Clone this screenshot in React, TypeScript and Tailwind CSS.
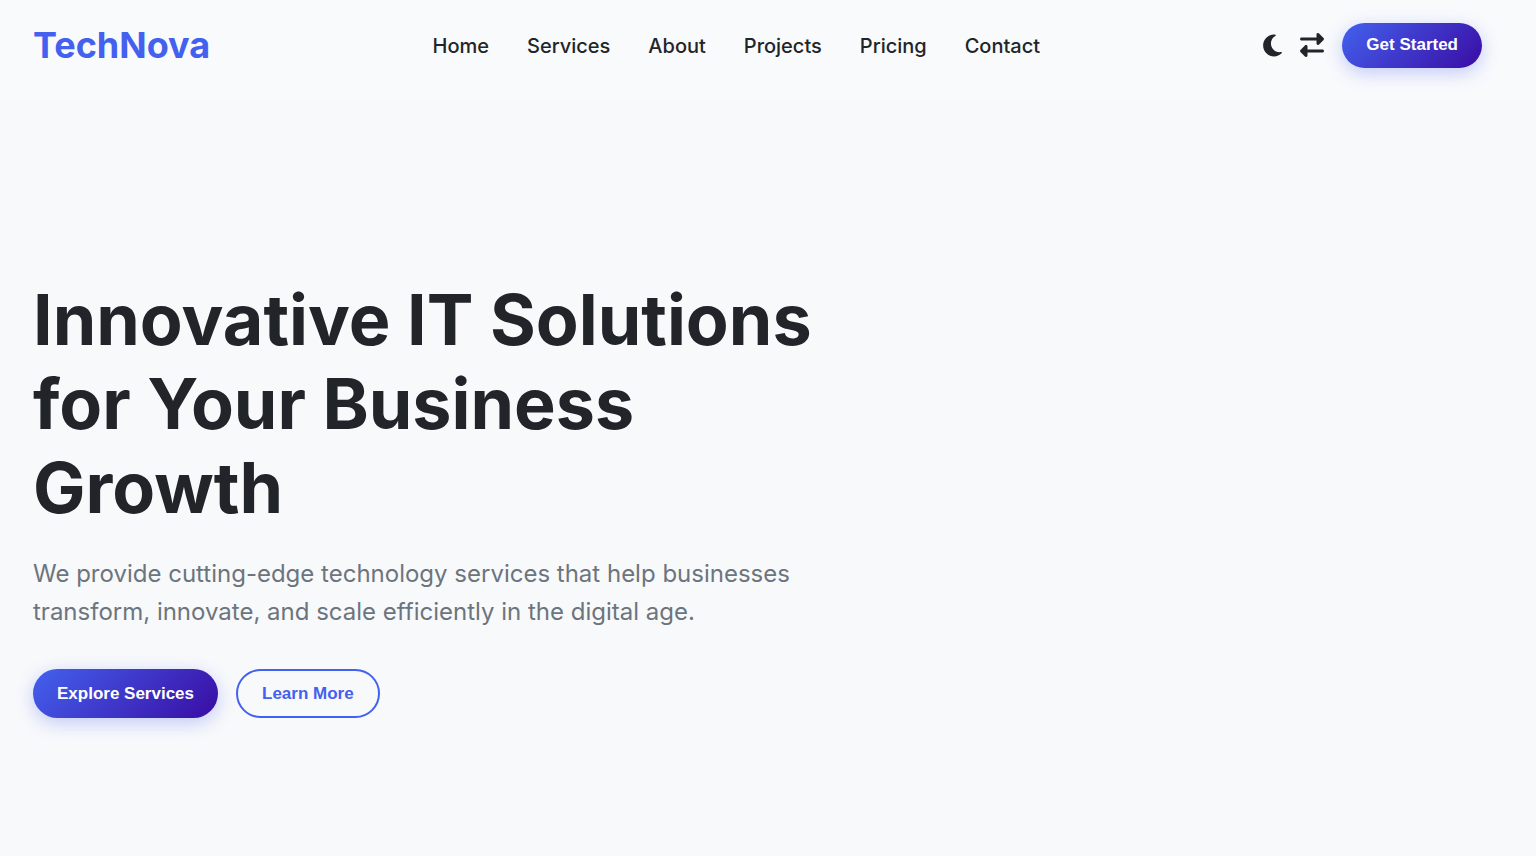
import { FaMoon, FaRightLeft } from "react-icons/fa6";

const links = ["Home", "Services", "About", "Projects", "Pricing", "Contact"];

const pill =
  "rounded-full font-['Liberation_Sans',Arial,sans-serif] text-[17px] font-bold leading-5 px-6";
const filled =
  "bg-linear-135/srgb from-[#4361ee] to-[#3a0ca3] text-white shadow-[0_5px_18px_rgba(67,97,238,0.3)]";

export default function App() {
  return (
    <div className="min-h-screen bg-[#f8f9fb] font-['Inter',sans-serif] text-[#212529]">
      <header className="flex h-[100px] items-start justify-between bg-[#f9fafc] pl-[33px] pr-[54px] pt-[23px]">
        <a href="#home" className="text-4xl font-bold leading-[45px] text-[#4361ee]">
          TechNova
        </a>
        <nav className="flex gap-[38px] pl-0.5 text-xl font-medium leading-[47px]">
          {links.map((link) => (
            <a key={link} href={`#${link.toLowerCase()}`}>
              {link}
            </a>
          ))}
        </nav>
        <div className="flex h-11 items-center">
          <button aria-label="Toggle theme" className="mr-[15px]">
            <FaMoon size={25} />
          </button>
          <button aria-label="Switch direction" className="mr-[18px]">
            <FaRightLeft size={24} />
          </button>
          <button className={`${pill} ${filled} h-[45px]`}>Get Started</button>
        </div>
      </header>
      <main className="px-[33px] pt-[178px]">
        <h1 className="max-w-[800px] text-[70px] font-bold leading-[84px]">
          Innovative IT Solutions for Your Business Growth
        </h1>
        <p className="mt-[25px] max-w-[800px] text-2xl leading-[38px] text-[#6c757d]">
          We provide cutting-edge technology services that help businesses transform, innovate, and
          scale efficiently in the digital age.
        </p>
        <div className="mt-[38px] flex gap-[18px]">
          <button className={`${pill} ${filled} h-[49px]`}>Explore Services</button>
          <button className={`${pill} h-[49px] border-2 border-[#4361ee] text-[#4361ee]`}>
            Learn More
          </button>
        </div>
      </main>
    </div>
  );
}
